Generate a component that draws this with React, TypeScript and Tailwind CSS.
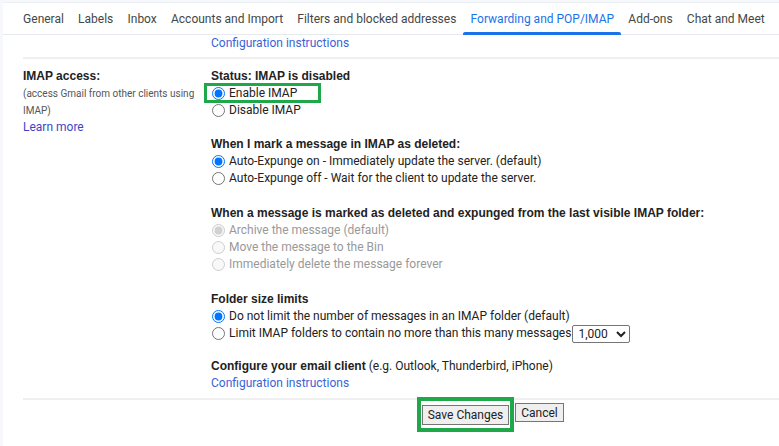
import React from "react";

const font = { fontFamily: 'Roboto, "Liberation Sans", Arial, sans-serif' };
const boldFont = { fontFamily: '"Liberation Sans", Arial, sans-serif' };

function Radio({ label, checked, disabled, name, children }: { label: string; checked?: boolean; disabled?: boolean; name: string; children?: React.ReactNode }) {
  return (
    <label className={`flex items-center h-[17px] ${disabled ? "text-[#999]" : "text-[#222]"}`}>
      <input
        type="radio"
        name={name}
        defaultChecked={checked}
        disabled={disabled}
        className="m-0 ml-[1px] mr-[4px] w-[13px] h-[13px]"
      />
      <span>{label}</span>
      {children}
    </label>
  );
}

function Heading({ children, className = "" }: { children: React.ReactNode; className?: string }) {
  return (
    <div className={`font-bold text-[#222] ${className}`} style={boldFont}>
      {children}
    </div>
  );
}

export default function App() {
  const tabs = [
    "General",
    "Labels",
    "Inbox",
    "Accounts and Import",
    "Filters and blocked addresses",
    "Forwarding and POP/IMAP",
    "Add-ons",
    "Chat and Meet",
  ];
  return (
    <div className="w-[779px] h-[446px] bg-[#f6f8fc] flex overflow-hidden" style={font}>
      <div className="w-[3px] shrink-0" />
      <div className="flex-1 flex flex-col bg-white mt-[2px] border-t border-[#eceff3]">
        {/* Tabs */}
        <div className="flex h-[32px] pl-[13px] border-b border-[#e6e9ee] text-[12px] text-[#444746]">
          {tabs.map((t) => {
            const active = t === "Forwarding and POP/IMAP";
            return (
              <div
                key={t}
                className={`px-[7.1px] flex items-center whitespace-nowrap relative ${active ? "text-[#1a73e8]" : ""}`}
              >
                {t}
                {active && <div className="absolute left-0 right-0 bottom-[-1px] h-[3px] bg-[#1a73e8] rounded-t-[2px]" />}
              </div>
            );
          })}
        </div>
        <div className="h-[16px] flex items-center pl-[208px] text-[12px] text-[#3b63d6]">Configuration instructions</div>
        <div className="ml-[20px] mt-[6px] h-[2px] bg-[#efefef]" />
        {/* IMAP section */}
        <div className="flex pt-[9px] text-[12px] leading-[17px]">
          <div className="w-[208px] pl-[20px] pr-[10px] shrink-0">
            <Heading>IMAP access:</Heading>
            <div className="text-[10px] text-[#555] leading-[17px]">(access Gmail from other clients using IMAP)</div>
            <div className="text-[12px] text-[#3f45c4]">Learn more</div>
          </div>
          <div className="flex flex-col">
            <Heading>Status: IMAP is disabled</Heading>
            <div className="relative">
              <div className="absolute left-[-7px] top-[-2px] w-[117px] h-[20px] border-[3px] border-[#1fa84a]" />
              <Radio name="imap" label="Enable IMAP" checked />
            </div>
            <Radio name="imap" label="Disable IMAP" />

            <Heading className="mt-[17px]">When I mark a message in IMAP as deleted:</Heading>
            <Radio name="exp" label="Auto-Expunge on - Immediately update the server. (default)" checked />
            <Radio name="exp" label="Auto-Expunge off - Wait for the client to update the server." />

            <Heading className="mt-[18px]">
              When a message is marked as deleted and expunged from the last visible IMAP folder:
            </Heading>
            <Radio name="del" label="Archive the message (default)" checked disabled />
            <Radio name="del" label="Move the message to the Bin" disabled />
            <Radio name="del" label="Immediately delete the message forever" disabled />

            <Heading className="mt-[18px]">Folder size limits</Heading>
            <Radio name="fold" label="Do not limit the number of messages in an IMAP folder (default)" checked />
            <Radio name="fold" label="Limit IMAP folders to contain no more than this many messages">
              <select
                defaultValue="1000"
                className="ml-[1px] h-[18px] w-[58px] border border-[#767676] rounded-[2px] text-[12px] text-[#222] bg-white px-[1px]"
                style={font}
              >
                <option value="1000">1,000</option>
                <option value="2000">2,000</option>
                <option value="5000">5,000</option>
                <option value="10000">10,000</option>
              </select>
            </Radio>

            <div className="mt-[16px] text-[#222]">
              <span className="font-bold" style={boldFont}>Configure your email client</span> (e.g. Outlook, Thunderbird, iPhone)
            </div>
            <div className="text-[#3b63d6]">Configuration instructions</div>
          </div>
        </div>
        <div className="ml-[20px] mt-[6px] h-[2px] bg-[#efefef]" />
        <div className="flex items-start pl-[419px] pt-[2px] gap-[6px]">
          <div className="relative">
            <div className="absolute left-[-5px] top-[-5px] right-[-5px] bottom-[-6px] border-[4px] border-[#1fa84a]" />
            <button className="h-[20px] w-[87px] bg-[#efefef] border border-[#767676] text-[12px] text-[#222] leading-none" style={font}>
              Save Changes
            </button>
          </div>
          <button className="mt-[1px] h-[19px] w-[49px] bg-[#efefef] border border-[#767676] text-[12px] text-[#222] leading-none" style={font}>
            Cancel
          </button>
        </div>
      </div>
    </div>
  );
}
